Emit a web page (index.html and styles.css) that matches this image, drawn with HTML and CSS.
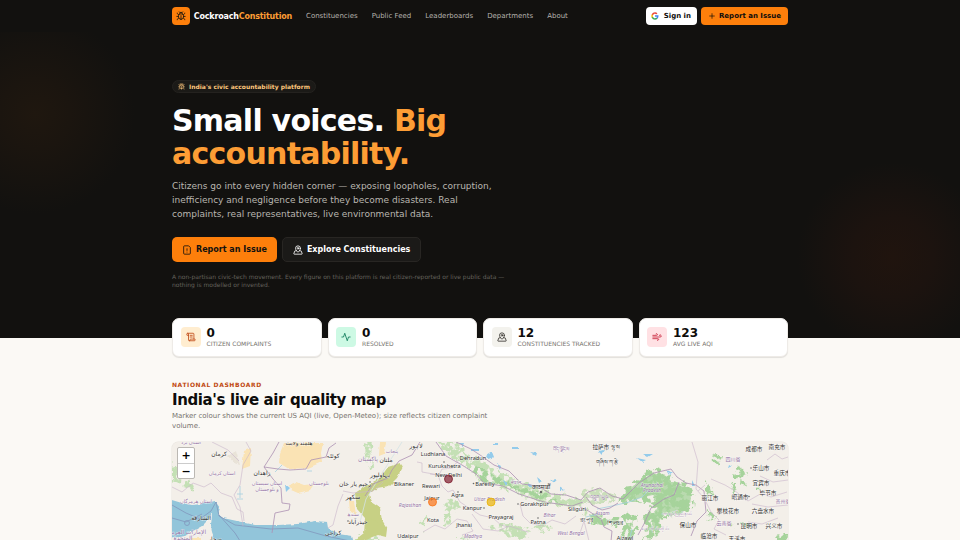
FILE: index.html
```html
<!DOCTYPE html>
<html lang="en">
  <head>
    <meta charset="UTF-8" />
    <meta name="viewport" content="width=device-width, initial-scale=1.0" />
    <title>CockroachConstitution</title>
    <link rel="stylesheet" href="styles.css">
  </head>
  <body>
    <!-- shared icons -->
    <svg class="sprite" aria-hidden="true">
      <symbol id="bug" viewBox="0 0 24 24">
        <path d="m8 2 1.88 1.88M14.12 3.88 16 2M9 7.13v-1a3.003 3.003 0 1 1 6 0v1M12 20c-3.3 0-6-2.7-6-6v-3a4 4 0 0 1 4-4h4a4 4 0 0 1 4 4v3c0 3.3-2.7 6-6 6M12 20v-9M6.53 9C4.6 8.8 3 7.1 3 5M6 13H2M3 21c0-2.1 1.7-3.9 3.8-4M20.97 5c0 2.1-1.6 3.8-3.5 4M22 13h-4M17.2 17c2.1.1 3.8 1.9 3.8 4" />
      </symbol>
      <symbol id="pin" viewBox="0 0 24 24">
        <path d="M18 8c0 3.613-3.869 7.429-5.393 8.795a1 1 0 0 1-1.214 0C9.87 15.429 6 11.613 6 8a6 6 0 0 1 12 0" />
        <circle cx="12" cy="8" r="2" />
        <path d="M8.714 14h-3.71a1 1 0 0 0-.948.683l-2.004 6A1 1 0 0 0 3 22h18a1 1 0 0 0 .948-1.316l-2-6a1 1 0 0 0-.949-.684h-3.712" />
      </symbol>
    </svg>

    <header class="navbar">
      <div class="container nav-inner">
        <a class="brand" href="#">
          <span class="brand-mark"><svg class="icon"><use href="#bug" /></svg></span>
          <span class="brand-name">Cockroach<b>Constitution</b></span>
        </a>
        <nav class="nav-links">
          <a href="#">Constituencies</a>
          <a href="#">Public Feed</a>
          <a href="#">Leaderboards</a>
          <a href="#">Departments</a>
          <a href="#">About</a>
        </nav>
        <div class="nav-actions">
          <a class="btn-small btn-google" href="#">
            <svg class="google" viewBox="0 0 24 24">
              <path fill="#4285F4" d="M22.56 12.25c0-.78-.07-1.53-.2-2.25H12v4.26h5.92a5.06 5.06 0 0 1-2.2 3.32v2.77h3.57c2.08-1.92 3.27-4.74 3.27-8.1z" />
              <path fill="#34A853" d="M12 23c2.97 0 5.46-.98 7.28-2.66l-3.57-2.77c-.98.66-2.23 1.06-3.71 1.06-2.86 0-5.29-1.93-6.16-4.53H2.18v2.84A11 11 0 0 0 12 23z" />
              <path fill="#FBBC05" d="M5.84 14.09a6.6 6.6 0 0 1 0-4.18V7.07H2.18a11 11 0 0 0 0 9.86l3.66-2.84z" />
              <path fill="#EA4335" d="M12 5.38c1.62 0 3.06.56 4.21 1.64l3.15-3.15C17.45 2.09 14.97 1 12 1A11 11 0 0 0 2.18 7.07l3.66 2.84C6.71 7.31 9.14 5.38 12 5.38z" />
            </svg>
            <span>Sign in</span>
          </a>
          <a class="btn-small btn-report" href="#">
            <svg class="icon" viewBox="0 0 24 24"><path d="M5 12h14M12 5v14" /></svg>
            <span>Report an Issue</span>
          </a>
        </div>
      </div>
    </header>

    <section class="hero">
      <div class="container">
        <div class="badge">
          <svg class="icon"><use href="#bug" /></svg>
          <span>India's civic accountability platform</span>
        </div>
        <h1>Small voices. <span>Big<br>accountability.</span></h1>
        <p class="lead">Citizens go into every hidden corner — exposing loopholes, corruption,<br>inefficiency and negligence before they become disasters. Real<br>complaints, real representatives, live environmental data.</p>
        <div class="hero-actions">
          <a class="btn btn-primary" href="#">
            <svg class="icon" viewBox="0 0 24 24"><path d="M15 2H6a2 2 0 0 0-2 2v16a2 2 0 0 0 2 2h12a2 2 0 0 0 2-2V7ZM12 9v4M12 17h.01" /></svg>
            <span>Report an Issue</span>
          </a>
          <a class="btn btn-ghost" href="#">
            <svg class="icon"><use href="#pin" /></svg>
            <span>Explore Constituencies</span>
          </a>
        </div>
        <p class="note">A non-partisan civic-tech movement. Every figure on this platform is real citizen-reported or live public data —<br>nothing is modelled or invented.</p>
      </div>
    </section>

    <section class="container stats">
      <div class="stat">
        <span class="stat-icon orange"><svg class="icon" viewBox="0 0 24 24"><path d="M15 12h-5M15 8h-5M19 17V5a2 2 0 0 0-2-2H4M8 21h12a2 2 0 0 0 2-2v-1a1 1 0 0 0-1-1H11a1 1 0 0 0-1 1v1a2 2 0 1 1-4 0V5a2 2 0 1 0-4 0v2a1 1 0 0 0 1 1h3" /></svg></span>
        <div><strong>0</strong><small>Citizen complaints</small></div>
      </div>
      <div class="stat">
        <span class="stat-icon green"><svg class="icon" viewBox="0 0 24 24"><path d="M22 12h-4l-3 9L9 3l-3 9H2" /></svg></span>
        <div><strong>0</strong><small>Resolved</small></div>
      </div>
      <div class="stat">
        <span class="stat-icon grey"><svg class="icon"><use href="#pin" /></svg></span>
        <div><strong>12</strong><small>Constituencies tracked</small></div>
      </div>
      <div class="stat">
        <span class="stat-icon red"><svg class="icon" viewBox="0 0 24 24"><path d="M12.8 19.6A2 2 0 1 0 14 16H2M17.5 8a2.5 2.5 0 1 1 2 4H2M9.8 4.4A2 2 0 1 1 11 8H2" /></svg></span>
        <div><strong>123</strong><small>Avg live AQI</small></div>
      </div>
    </section>

    <section class="container dashboard">
      <p class="eyebrow">National dashboard</p>
      <h2>India's live air quality map</h2>
      <p class="sub">Marker colour shows the current US AQI (live, Open-Meteo); size reflects citizen complaint<br>volume.</p>

      <div class="map">
        <svg class="map-canvas" viewBox="172 441 616 99">
          <defs>
            <!-- ragged edge with bare patches -->
            <filter id="rough" x="-5%" y="-5%" width="110%" height="110%">
              <feTurbulence type="fractalNoise" baseFrequency="0.16" numOctaves="3" seed="4" result="noise" />
              <feDisplacementMap in="SourceGraphic" in2="noise" scale="9" xChannelSelector="R" yChannelSelector="G" result="shape" />
              <feColorMatrix in="noise" values="0 0 0 0 0  0 0 0 0 0  0 0 0 0 0  0 0 9 0 -3.4" result="holes" />
              <feComposite in="shape" in2="holes" operator="in" />
            </filter>
            <filter id="coast" x="-5%" y="-5%" width="110%" height="110%">
              <feTurbulence type="fractalNoise" baseFrequency="0.2" numOctaves="2" seed="9" result="noise" />
              <feDisplacementMap in="SourceGraphic" in2="noise" scale="3" xChannelSelector="R" yChannelSelector="G" />
            </filter>
          </defs>

          <!-- deserts -->
          <g class="sand" filter="url(#coast)">
            <path d="M284 442h39l-2 10 1 9-14 6-19 1-10-6 1-10z" />
            <path d="M289 484l7-3 8 3 10-1-4 6-12 3-7-3z" />
            <path d="M244 450l7-3-1 18-8 3z" />
            <path d="M380 441h6l-2 12-5 2zM349 500h5l2 14-6-3zM191 537h10v3h-10z" />
            <path d="M228 455l8-5 4 14-6-2z" class="dune" />
          </g>

          <!-- sea -->
          <g filter="url(#coast)">
            <path class="sea" d="M168 498l14 4 10 2 10-1 13-3 5 7-2 6 5 4 14 3 18 4h23l20-1 17-3 12 1 1 6 10 6 14 2 3 11H217l-5-14-1-8 1-12-5 8-5 5-9 5-8 5-17 3z" />
          </g>
          <g class="border coast">
            <path d="M172 504l14 8 14 6 11-8 5-9 3 14 16 9 36 4 27-1 28 8 24 5M172 517l14 4 16-8M219 514l16 18 5 8" />
            <circle cx="187" cy="522" r="2.5" />
          </g>

          <!-- woodland -->
          <g class="wood" filter="url(#rough)">
            <path class="hill" d="M437 441l13 14 17 11 17 17 20 5 17 7 22 7 27 4 14-1-3-7-22-6-21-5-20-7-17-10-17-8-23-14-5-8z" />
            <path d="M469 467l16 14 20 4 17 7 21 6 20 4-19-9-22-6-18-7-16-9-14-8z" />
            <path d="M618 502l4-12 15-12 16-11 14 6 10 9 11 1 6 12-1 12-13 6-14 2-9 17-5 8h-10l5-15-5-9 10-13-8-2-13 1z" />
            <path d="M590 513l18 3 15-1 13-3 2 11-5 15-9 2-3-11 5-7-12 3-24-2z" />
            <path d="M581 490l14-3 20 5-1 9-21 2-12-3z" class="pale" />
            <path d="M713 452l8 4-1 8-6-3zM733 474l4-10 8 5 4 17-6-3zM733 480l3 1-1 12-4-3zM705 479l6 7 2 9-8-4zM707 511l8 1-2 7-7 2zM776 534h12v10h-12z" />
            <path d="M742 524l4-3 4 4-5 5zM730 525l3-4 2 8zM756 487l4 2-1 5z" />
            <path class="hill" d="M447 497l8 1 6 9-9 5-9-4zM446 514l6-5-3 15-7 3zM421 521l6-7-3 18zM489 525l20-2 22 7-8 8-19-5zM585 505l3 5-4 8zM455 535l15 1-8 4zM365 441h7l-2 14-4 7zM370 455l4 10-3 4z" />
            <path class="hill" d="M172 462l9 10 9 6 5 12-10-5-13-5zM357 536l16-3 8 7h-24zM533 526l11-5 8 7-8 4z" />
          </g>
          <!-- solid forest under the mottled layer -->
          <g class="wood core" filter="url(#coast)">
            <path d="M622 500l4-9 13-11 14-9 14 5 9 9 11 1 4 10-1 9-12 6-15 2-8 16-5 4 4-22 8-12-9-5-17 4z" />
          </g>
          <path class="field" filter="url(#coast)" d="M380 477l-16 9-9 6 2 16 8 9-1 15-9 7 9 1 14-6 8 2 1-8-5-8-2-13-9-6-2-8 8-6 12-2 8-8 6-11-3-4-12 4z" />
          <path class="field" d="M370 517l7 4 1 12-8 3z" />

          <!-- lakes and rivers -->
          <g class="lake" filter="url(#coast)">
            <path d="M486 455l6-4 2 5-6 2zM459 442h5l-1 3zM472 448h7v2h-7zM493 442h5v2h-5zM512 446h6v2h-6zM530 451l7 1-1 3zM537 476l5 4-3 2zM550 479l7-1-2 4zM503 479l5 3-2 3zM497 463l4 2-1 4zM598 450l7-1-3 5zM643 453h10l-5 3zM637 457l9 2-4 2zM667 469l6 3-3 2zM692 479l3 6h-3zM285 483l5 4-4 4zM527 482l5 2v2h-5zM560 486l5 3-5 1zM729 464l3 2-4 2z" />
          </g>
          <g class="river">
            <path d="M597 508l15-3 17-4 13-5 7-7M586 516l12-3M282 464l-7 7M240 485v12M237 493h6M237 498h6M307 470h5M632 528l-2 8" />
            <path class="faint" d="M402 441l-18 28-18 29-6 23" />
          </g>

          <!-- state and country borders -->
          <g class="border">
            <path d="M279 441l-6 11-9 14 14 2 12 1 16-1 5-9 15-3 3-9 7-5M264 466l9 12 8 9 1 15 8 1-1 6-14 3-3 20M420 441l-8 13-13 6-7 9-4 8-15 6-8 12" />
            <path d="M436 441l10 14 16 9 14 9 8 9 19 3 16 8 25 8 28 4 11-4M456 441l15 7 12 8 11 8 15 6 13 13 16 2 13 8 15 1 15 5 7-8 12-4 12 8 11 3 16-16 15-10 17-4 6 8 9 6 10 2 8 6 2 21-9 9-6 15M580 506l7 3 14 9 3 8 8 4-1 10" />
            <path d="M618 502l-8 5-8 2-10-5-6-8M679 481l-5 13-10 4-13 9-7 16-6 11" />
          </g>
          <g class="border thin">
            <path d="M172 486l10 5 11-9 11 4 7-4 10 10 11 4 5 12 6 3 1 9M246 441l5 9-8 14-3 20-6 10 6 12 3 19M212 441l16 8 11 11M383 481l-10 9-20 2-10-2M343 493l-5 12-5 19-5 3" />
            <path d="M417 461l5 1v9l17 3 3-6 11-1 5-8M430 473l8 1 4 11 6 6 5-2 7 12 20 13 13 3 8 7 7 2M423 531l12-7 10 4 12-10 10 2 6 10-11 4M472 513l11 15 15 2 11-5 19 6M520 503l3 12 7 7 12 3 10-6 13 4 11-8M580 532l4-12 5 20" />
            <path d="M692 441l6 20-2 27 8 9 7 14 8 8-5 9 12 6M711 478l14 6 10 6 8 6 5 4 14-8 9 4 16-5M767 459l8-6 7 5 6-2M760 475l13 6 15-2M752 503l16 3 20-2M748 521l14 2 16-6M705 484l-7 6" />
          </g>

          <!-- region names -->
          <g class="region">
            <text x="191" y="443">استان یزد</text>
            <text x="222" y="474">استان کرمان</text>
            <text x="267" y="484">استان سیستان</text>
            <text x="267" y="490">و بلوچستان</text>
            <text x="319" y="484">بلوچستان</text>
            <text x="196" y="502">استان هرمزگان</text>
            <text x="368" y="460" class="lg">پاکستان</text>
            <text x="392" y="452">پنجاب</text>
            <text x="353" y="515">سندھ</text>
            <text x="187" y="533" class="lg">الإمارات العربية</text>
            <text x="183" y="539" class="lg">المتحدة</text>
            <text x="410" y="506" class="it">Rajasthan</text>
            <text x="489.5" y="499.5" class="it">Uttar Pradesh</text>
            <text x="549.5" y="516" class="it">Bihar</text>
            <text x="571" y="534" class="it">West Bengal</text>
            <text x="473" y="537" class="it">Madhya</text>
            <text x="602.5" y="513.5" class="it">Assam</text>
            <text x="652" y="486" class="it">Arunachal</text>
            <text x="652" y="491" class="it">Pradesh</text>
            <text x="516" y="483">नेपाल</text>
            <text x="561" y="450">བོད་ལྗོངས</text>
            <text x="599" y="498">འབྲུག་ཡུལ</text>
            <text x="733" y="460">四川省</text>
            <text x="724" y="524">云南省</text>
            <text x="783" y="502">贵州省</text>
            <text x="677" y="514">ကချင်ပြည်နယ်</text>
            <text x="655" y="529">စစ်ကိုင်းတိုင်း</text>
          </g>

          <!-- city names -->
          <g class="city">
            <text x="299" y="444">هلمند ولایت</text>
            <text x="219" y="455" class="ar">کرمان</text>
            <text x="262" y="474" class="ar">زاهدان</text>
            <text x="333" y="457" class="ar">کوئٹہ</text>
            <text x="386" y="461" class="ar">ملتان</text>
            <text x="416" y="447" class="ar">لاہور</text>
            <text x="380" y="476" class="ar">بہاولپور</text>
            <text x="355" y="485" class="ar">رحیم یار خان</text>
            <text x="353" y="498" class="ar">سکھر</text>
            <text x="358" y="523" class="ar">حیدرآباد</text>
            <text x="333" y="534" class="ar">کراچی</text>
            <text x="201" y="519" class="ar">الشارقة</text>
            <text x="215" y="540" class="ar">صحار</text>
            <text x="433" y="455">Ludhiana</text>
            <text x="473" y="459">Dehradun</text>
            <text x="444.5" y="467">Kurukshetra</text>
            <text x="448.5" y="476">New Delhi</text>
            <text x="404" y="485">Bikaner</text>
            <text x="431" y="486.5">Rewari</text>
            <text x="485" y="484.5">Bareilly</text>
            <text x="457.5" y="495.5">Agra</text>
            <text x="432" y="499">Jaipur</text>
            <text x="472.5" y="508.5">Kanpur</text>
            <text x="534.5" y="505">Gorakhpur</text>
            <text x="501" y="517.5">Prayagraj</text>
            <text x="433" y="521">Kota</text>
            <text x="538" y="523">Patna</text>
            <text x="464" y="526">Jhansi</text>
            <text x="408" y="536.5">Udaipur</text>
            <text x="577" y="509.5">Siliguri</text>
            <text x="625" y="539">Aizawl</text>
            <text x="541" y="488">काठमाडौँ</text>
            <text x="586" y="521">রংপুর</text>
            <text x="615" y="524">শিলচর</text>
            <text x="606" y="448">拉萨市 ལྷ་ས</text>
            <text x="607" y="463">གཞིས་ཀ་རྩེ</text>
            <text x="754" y="450">成都市</text>
            <text x="777" y="448">南充市</text>
            <text x="761" y="469">乐山市</text>
            <text x="782" y="474">重庆市</text>
            <text x="761" y="484">宜宾市</text>
            <text x="768" y="494">毕节市</text>
            <text x="740" y="498">昭通市</text>
            <text x="710" y="499">丽江市</text>
            <text x="728" y="512">攀枝花市</text>
            <text x="763" y="512">六盘水市</text>
            <text x="688" y="526">保山市</text>
            <text x="749" y="527">昆明市</text>
            <text x="774" y="527">兴义市</text>
            <text x="709" y="537">临沧市</text>
            <text x="737" y="539.5">玉溪市</text>
          </g>
          <g class="dot">
            <circle cx="444" cy="461" r="0.8" /><circle cx="473.5" cy="482.5" r="0.8" /><circle cx="484" cy="507" r="0.8" /><circle cx="518" cy="503" r="0.8" /><circle cx="541" cy="491" r="1.2" /><circle cx="538" cy="517" r="0.8" /><circle cx="458" cy="491" r="0.8" /><circle cx="348" cy="520" r="0.8" /><circle cx="370" cy="481" r="0.8" /><circle cx="751" cy="467" r="0.8" /><circle cx="738" cy="523" r="0.8" /><circle cx="749" cy="495.5" r="0.8" />
          </g>

          <!-- AQI markers -->
          <circle class="marker" cx="448.5" cy="478" r="4" fill="#7f1d2d" stroke="#7f1d2d" />
          <circle class="marker" cx="432.5" cy="501" r="4" fill="#f97316" stroke="#f97316" />
          <circle class="marker" cx="491" cy="501" r="4" fill="#eab308" stroke="#eab308" />
        </svg>
        <div class="zoom">
          <button>+</button>
          <button>−</button>
        </div>
      </div>
    </section>
  </body>
</html>
```

FILE: styles.css
```css
:root {
  --ink: #12110f;
  --paper: #fbf9f5;
  --orange: #fd7f0b;
  --orange-light: #fd9d35;
  --muted: #77736e;
}

* {
  box-sizing: border-box;
}

body {
  margin: 0;
  height: 540px;
  overflow: hidden;
  font-family: "DejaVu Sans", sans-serif;
  font-size: 8px;
  color: #0d0c0b;
  background: var(--paper);
}

a {
  color: inherit;
  text-decoration: none;
}

h1,
h2,
p {
  margin: 0;
}

.sprite {
  display: none;
}

.icon {
  width: 8px;
  height: 8px;
  flex: none;
  fill: none;
  stroke: currentColor;
  stroke-width: 2;
  stroke-linecap: round;
  stroke-linejoin: round;
}

.container {
  width: 640px;
  margin: 0 auto;
  padding: 0 12px;
}

/* navbar */
.navbar {
  background: var(--ink);
}

.nav-inner {
  height: 32px;
  display: flex;
  align-items: center;
}

.brand {
  display: flex;
  align-items: center;
  gap: 4px;
  width: 120px;
  font-size: 8px;
  font-weight: 700;
  letter-spacing: -0.2px;
  color: #fff;
  white-space: nowrap;
}

.brand b {
  color: var(--orange-light);
}

.brand-mark {
  width: 18px;
  height: 18px;
  display: grid;
  place-items: center;
  border-radius: 4px;
  background: var(--orange);
  color: var(--ink);
}

.brand-mark .icon {
  width: 10px;
  height: 10px;
}

.nav-links {
  display: flex;
  gap: 14px;
  margin-left: 14px;
  font-size: 7px;
  color: #b5b2ad;
  white-space: nowrap;
}

.nav-actions {
  display: flex;
  gap: 4px;
  margin-left: auto;
}

.btn-small {
  height: 18px;
  display: flex;
  align-items: center;
  border-radius: 4px;
  font-size: 7px;
  font-weight: 700;
  white-space: nowrap;
}

.btn-google {
  gap: 4.5px;
  padding: 0 6px 0 5.5px;
  background: #fff;
  color: #0d0c0b;
}

.google {
  width: 8px;
  height: 8px;
}

.btn-report {
  gap: 3px;
  padding: 0 7px;
  background: var(--orange);
}

/* hero */
.hero {
  height: 305.5px;
  padding-top: 48px;
  color: #fff;
  background:
    radial-gradient(circle at 35px 82px, #1f170f 0, #1b150f 35px, rgba(18, 17, 15, 0) 100px),
    radial-gradient(circle at 892px 225px, #20140e 0, #1c130f 40px, rgba(18, 17, 15, 0) 95px),
    var(--ink);
}

.badge {
  width: 144px;
  height: 13px;
  display: flex;
  align-items: center;
  gap: 4px;
  padding: 0 5px;
  border: 1px solid #24221f;
  border-radius: 7px;
  background: #1b1a17;
  color: #fcc67c;
  font-size: 6px;
  font-weight: 700;
  white-space: nowrap;
}

.badge .icon {
  width: 7px;
  height: 7px;
}

h1 {
  margin-top: 10.5px;
  font-size: 30px;
  line-height: 33px;
  letter-spacing: -0.75px;
}

h1 span {
  color: var(--orange-light);
}

.lead {
  margin-top: 9.5px;
  font-size: 9px;
  line-height: 14px;
  color: #b9b6b0;
  white-space: nowrap;
}

.hero-actions {
  display: flex;
  gap: 5px;
  margin-top: 16px;
}

.btn {
  height: 25px;
  display: flex;
  align-items: center;
  gap: 4px;
  padding: 0 10px;
  border-radius: 5px;
  font-weight: 700;
  white-space: nowrap;
}

.btn .icon {
  width: 10px;
  height: 10px;
}

.btn-primary {
  background: var(--orange);
  color: var(--ink);
}

.btn-ghost {
  border: 1px solid #282623;
  background: #1b1a18;
}

.note {
  margin-top: 11px;
  font-size: 6px;
  line-height: 8px;
  color: #64615c;
  white-space: nowrap;
}

/* stats */
.stats {
  display: grid;
  grid-template-columns: repeat(4, 1fr);
  gap: 6px;
  margin-top: -20px;
}

.stat {
  height: 39px;
  display: flex;
  align-items: center;
  gap: 6px;
  padding: 0 7.5px;
  border: 1px solid #eeebe7;
  border-radius: 7px;
  background: #fff;
  box-shadow: 0 1px 1px rgba(0, 0, 0, 0.1);
}

.stat-icon {
  width: 20px;
  height: 20px;
  display: grid;
  place-items: center;
  border-radius: 4px;
}

.stat-icon .icon {
  width: 10px;
  height: 10px;
}

.orange {
  background: #ffedd0;
  color: #c04a17;
}

.green {
  background: #cdf9e4;
  color: #0b7a58;
}

.grey {
  background: #f3f2ed;
  color: #35322e;
}

.red {
  background: #ffe1e4;
  color: #c8243b;
}

.stat strong,
.stat small {
  display: block;
}

.stat strong {
  font-size: 12px;
  line-height: 14px;
}

.stat small {
  font-size: 6px;
  line-height: 8px;
  text-transform: uppercase;
  color: var(--muted);
  white-space: nowrap;
}

/* dashboard */
.dashboard {
  margin-top: 24px;
}

.eyebrow {
  font-size: 6px;
  line-height: 8px;
  font-weight: 700;
  letter-spacing: 0.6px;
  text-transform: uppercase;
  color: #c0480f;
}

h2 {
  margin-top: 2px;
  font-size: 15px;
  line-height: 18px;
  letter-spacing: -0.38px;
}

.sub {
  margin-top: 2px;
  font-size: 7px;
  line-height: 10px;
  color: var(--muted);
}

.map {
  position: relative;
  height: 120px;
  margin-top: 11px;
  overflow: hidden;
  border-radius: 6px;
  background: #f3efe9;
  box-shadow: 0 0 0 0.5px #e9e6e0;
}

.map-canvas {
  display: block;
  width: 616px;
  height: 99px;
}

.zoom {
  position: absolute;
  top: 5px;
  left: 5px;
  width: 18px;
  border: 1px solid #bbb8b3;
  border-radius: 2px;
  background: #fff;
}

.zoom button {
  display: block;
  width: 16px;
  height: 15px;
  padding: 0;
  border: 0;
  background: none;
  font: bold 11px/15px "DejaVu Sans", sans-serif;
}

.zoom button + button {
  border-top: 1px solid #ccc;
}

/* map layers */
.sand {
  fill: #fae3b4;
}

.dune {
  fill: #e9e3d8;
}

.sea {
  fill: #92c5da;
}

.wood {
  fill: #a6d39b;
}

.core {
  opacity: 0.75;
}

.hill {
  fill: #c4e0b5;
}

.pale {
  fill: #cadfba;
}

.field {
  fill: #c7d084;
}

.lake {
  fill: #93cbeb;
}

.river {
  fill: none;
  stroke: #a5d0e0;
  stroke-width: 0.8;
}

.faint {
  stroke: #d3e2e4;
}

.border {
  fill: none;
  stroke: #ac91b2;
  stroke-width: 0.8;
}

.coast {
  stroke: #8297bd;
}

.thin {
  stroke: #c9b6cb;
  stroke-width: 0.6;
}

.city,
.region {
  font-family: "Noto Sans", "DejaVu Sans", "Noto Sans CJK SC", sans-serif;
  font-size: 5.6px;
  text-anchor: middle;
  fill: #2f2f2f;
  stroke: rgba(255, 255, 255, 0.6);
  stroke-width: 0.8px;
  paint-order: stroke;
}

.region {
  font-size: 5px;
  fill: #9473a5;
}

.region .it {
  font-style: italic;
}

.region .lg {
  font-size: 6px;
}

.city .ar {
  font-size: 6px;
}

.dot {
  fill: #666;
}

.marker {
  fill-opacity: 0.7;
  stroke-width: 0.8;
}
```
